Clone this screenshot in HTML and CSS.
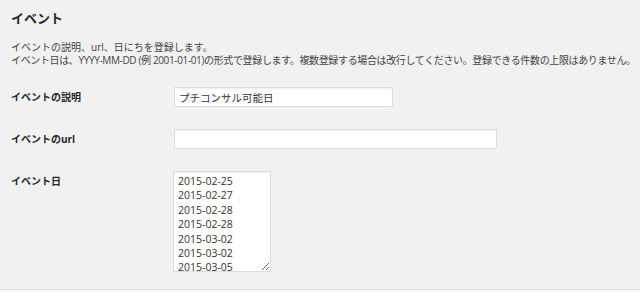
FILE: index.html
```html
<!DOCTYPE html>
<html lang="ja">

  <head>
    <meta charset="UTF-8">
    <meta name="viewport" content="width=device-width, initial-scale=1.0">
    <title>イベント</title>
    <link rel="stylesheet" href="styles.css">
  </head>

  <body>
    <div class="wrap">
      <h2 class="title">イベント</h2>
      <p class="desc">イベントの説明、url、日にちを登録します。<br><span class="tight">イベント日は、YYYY-MM-DD (例 2001-01-01)の形式で登録します。複数登録する場合は改行してください。登録できる件数の上限はありません。</span></p>

      <div class="form">
        <div class="row">
          <label class="label" for="ev-desc">イベントの説明</label>
          <input type="text" id="ev-desc" class="field short" value="プチコンサル可能日">
        </div>
        <div class="row">
          <label class="label" for="ev-url">イベントのurl</label>
          <input type="text" id="ev-url" class="field long" value="">
        </div>
        <div class="row">
          <label class="label" for="ev-day">イベント日</label>
          <textarea id="ev-day" class="field dates">2015-02-25
2015-02-27
2015-02-28
2015-02-28
2015-03-02
2015-03-02
2015-03-05</textarea>
        </div>
      </div>
    </div>
    <div class="bottom"></div>
  </body>

</html>
```

FILE: styles.css
```css
body {
  margin: 0;
  background: #f1f1f1;
  color: #444;
  font-family: "Open Sans", "Noto Sans CJK JP", sans-serif;
}

.wrap {
  padding: 0 11px;
  height: 289px;
  box-sizing: border-box;
  overflow: hidden;
}

.title {
  margin: 0;
  padding-top: 9px;
  font-size: 13px;
  line-height: 18px;
  font-weight: bold;
  color: #23282d;
}

.desc {
  margin: 14px 0 0;
  font-size: 10px;
  line-height: 13px;
  color: #444;
  white-space: nowrap;
}

/* 2行目は長いので少し詰める */
.desc .tight {
  letter-spacing: -0.36px;
}

.form {
  margin-top: 20px;
}

.row {
  display: grid;
  grid-template-columns: 163px 1fr;
  align-items: start;
  margin-bottom: 22px;
}

.label {
  font-size: 10px;
  line-height: 20px;
  font-weight: bold;
  color: #23282d;
}

/* 入力欄 */
.field {
  box-sizing: border-box;
  height: 20px;
  margin: 0;
  padding: 0 4px;
  border: 1px solid #ddd;
  background: #fff;
  box-shadow: inset 0 1px 2px rgba(0, 0, 0, .07);
  font-family: "Open Sans", "Noto Sans CJK JP", sans-serif;
  font-size: 10.5px;
  color: #333;
  outline: none;
}

.short {
  width: 219px;
}

.long {
  width: 323px;
}

.dates {
  width: 98px;
  height: 101px;
  margin-left: -1px;
  padding: 2px 4px;
  line-height: 14.4px;
  resize: vertical;
  overflow: hidden;
}

.bottom {
  height: 3px;
  border-top: 1px solid #e2e2e2;
  background: #f6f6f6;
}
```
